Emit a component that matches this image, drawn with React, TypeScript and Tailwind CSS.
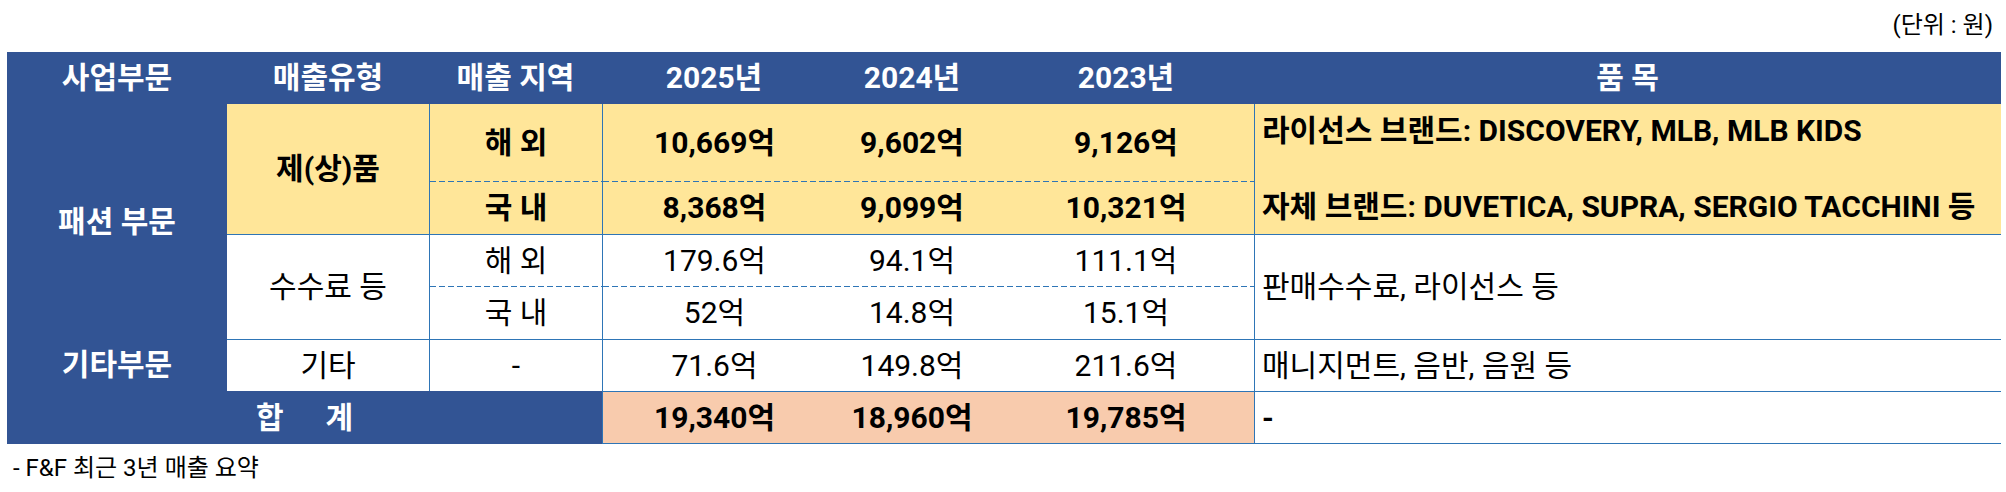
import type { ReactNode } from "react";
import clsx from "clsx";

const FONT = "font-['Roboto','Noto_Sans_CJK_KR',sans-serif]";

// solid cell edges
const EDGE = "border-[#2e75b6]";
// Excel-style dashed rule along the bottom of a cell
const DASH =
  "bg-[image:repeating-linear-gradient(90deg,#2e75b6_0_6px,transparent_6px_9px)] bg-[length:100%_1px] bg-bottom bg-no-repeat";

const VAL_COLS = ["col-start-4", "col-start-5", "col-start-6"];

const PRODUCT = [
  { region: "해 외", row: "row-start-2", values: ["10,669억", "9,602억", "9,126억"] },
  { region: "국 내", row: "row-start-3", values: ["8,368억", "9,099억", "10,321억"] },
];

const FEES = [
  { region: "해 외", row: "row-start-4", values: ["179.6억", "94.1억", "111.1억"] },
  { region: "국 내", row: "row-start-5", values: ["52억", "14.8억", "15.1억"] },
];

const OTHER = ["71.6억", "149.8억", "211.6억"];
const TOTAL = ["19,340억", "18,960억", "19,785억"];

function Cell({ className, children }: { className?: string; children?: ReactNode }) {
  return <div className={clsx("flex items-center justify-center", className)}>{children}</div>;
}

export default function App() {
  return (
    <div className={clsx("h-[492px] w-[2006px] bg-white text-black", FONT)}>
      <div className="flex h-[52px] items-center justify-end pr-[13px] pb-[2px] text-[24px] leading-none">
        (단위 : 원)
      </div>

      <div className="ml-[7px] grid w-[1994px] grid-cols-[220px_202px_173px_224px_172px_256px_747px] grid-rows-[52px_78px_52px_53px_52px_52px_53px] text-[30px] leading-none">
        {/* header */}
        <Cell className="col-start-1 row-start-1 bg-[#325494] font-bold text-white">사업부문</Cell>
        <Cell className="col-start-2 row-start-1 bg-[#325494] font-bold text-white">매출유형</Cell>
        <Cell className="col-start-3 row-start-1 bg-[#325494] font-bold text-white">매출 지역</Cell>
        <Cell className="col-start-4 row-start-1 bg-[#325494] font-bold text-white">2025년</Cell>
        <Cell className="col-start-5 row-start-1 bg-[#325494] font-bold text-white">2024년</Cell>
        <Cell className="col-start-6 row-start-1 bg-[#325494] font-bold text-white">2023년</Cell>
        <Cell className="col-start-7 row-start-1 bg-[#325494] font-bold text-white">품 목</Cell>

        {/* business segments */}
        <Cell className="col-start-1 row-start-2 row-span-4 bg-[#325494] font-bold text-white">
          패션 부문
        </Cell>
        <Cell className="col-start-1 row-start-6 bg-[#325494] font-bold text-white">기타부문</Cell>

        {/* products */}
        <Cell className="col-start-2 row-start-2 row-span-2 bg-[#ffe699] font-bold">제(상)품</Cell>
        {PRODUCT.map((r, i) => (
          <div key={r.region} className="contents">
            <Cell
              className={clsx(
                "col-start-3 border-l bg-[#ffe699] font-bold",
                EDGE,
                r.row,
                i === 0 && DASH
              )}
            >
              {r.region}
            </Cell>
            {r.values.map((v, j) => (
              <Cell
                key={v}
                className={clsx(
                  "bg-[#ffe699] font-bold",
                  VAL_COLS[j],
                  r.row,
                  j === 0 && clsx("border-l", EDGE),
                  i === 0 && DASH
                )}
              >
                {v}
              </Cell>
            ))}
          </div>
        ))}
        <div
          className={clsx(
            "col-start-7 row-start-2 row-span-2 flex flex-col justify-center border-l bg-[#ffe699] pl-[7px] font-bold leading-[38px]",
            EDGE
          )}
        >
          <span>라이선스 브랜드: DISCOVERY, MLB, MLB KIDS</span>
          <span>&nbsp;</span>
          <span>자체 브랜드: DUVETICA, SUPRA, SERGIO TACCHINI 등</span>
        </div>

        {/* fees */}
        <Cell className={clsx("col-start-2 row-start-4 row-span-2 border-t bg-white", EDGE)}>
          수수료 등
        </Cell>
        {FEES.map((r, i) => (
          <div key={r.region} className="contents">
            <Cell
              className={clsx(
                "col-start-3 border-l bg-white",
                EDGE,
                r.row,
                i === 0 && clsx("border-t", DASH)
              )}
            >
              {r.region}
            </Cell>
            {r.values.map((v, j) => (
              <Cell
                key={v}
                className={clsx(
                  "bg-white",
                  EDGE,
                  VAL_COLS[j],
                  r.row,
                  j === 0 && "border-l",
                  i === 0 && clsx("border-t", DASH)
                )}
              >
                {v}
              </Cell>
            ))}
          </div>
        ))}
        <div
          className={clsx(
            "col-start-7 row-start-4 row-span-2 flex items-center border-t border-l bg-white pl-[7px]",
            EDGE
          )}
        >
          판매수수료, 라이선스 등
        </div>

        {/* other */}
        <Cell className={clsx("col-start-2 row-start-6 border-t bg-white", EDGE)}>기타</Cell>
        <Cell className={clsx("col-start-3 row-start-6 border-t border-l bg-white", EDGE)}>-</Cell>
        {OTHER.map((v, j) => (
          <Cell
            key={v}
            className={clsx("row-start-6 border-t bg-white", EDGE, VAL_COLS[j], j === 0 && "border-l")}
          >
            {v}
          </Cell>
        ))}
        <div className={clsx("col-start-7 row-start-6 flex items-center border-t border-l bg-white pl-[7px]", EDGE)}>
          매니지먼트, 음반, 음원 등
        </div>

        {/* total */}
        <Cell className="col-start-1 row-start-7 col-span-3 gap-[42px] bg-[#325494] font-bold text-white">
          <span>합</span>
          <span>계</span>
        </Cell>
        {TOTAL.map((v, j) => (
          <Cell
            key={v}
            className={clsx(
              "row-start-7 border-y bg-[#f8cbad] font-bold",
              EDGE,
              VAL_COLS[j],
              j === 0 && "border-l"
            )}
          >
            {v}
          </Cell>
        ))}
        <div className={clsx("col-start-7 row-start-7 flex items-center border-y border-l bg-white pl-[7px] font-bold", EDGE)}>
          -
        </div>
      </div>

      <div className="flex h-[48px] items-center pl-[13px] text-[24px] leading-none">
        - F&amp;F 최근 3년 매출 요약
      </div>
    </div>
  );
}
